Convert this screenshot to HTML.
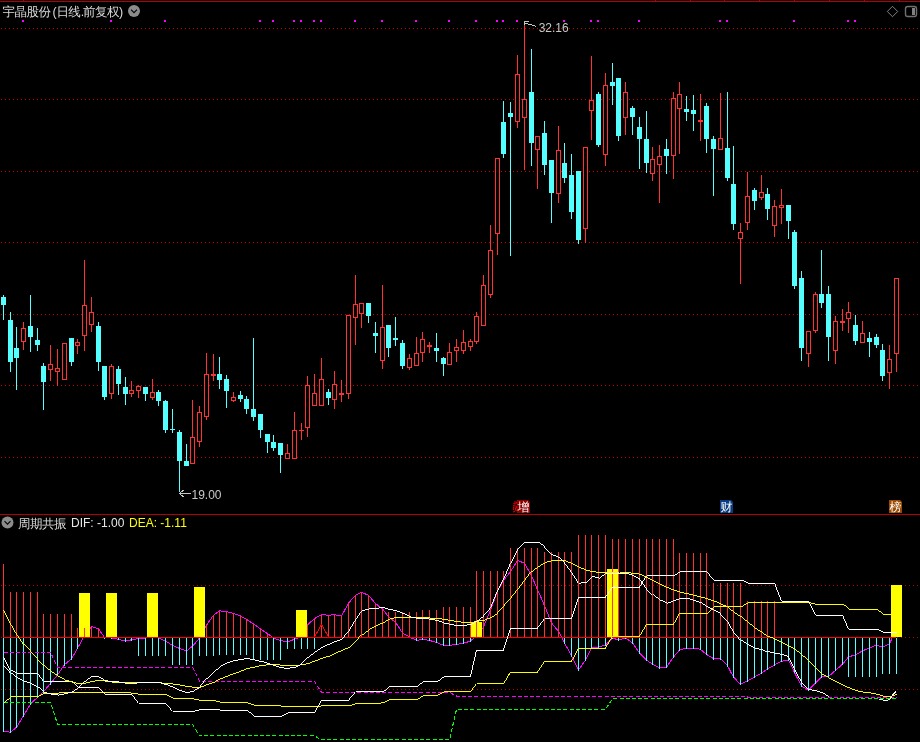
<!DOCTYPE html>
<html lang="zh"><head><meta charset="utf-8"><title>宇晶股份 日线</title>
<style>html,body{margin:0;padding:0;background:#000;}body{width:920px;height:742px;overflow:hidden;position:relative;font-family:"Liberation Sans","WenQuanYi Zen Hei","Noto Sans CJK SC",sans-serif;}svg{position:absolute;left:0;top:0;display:block;will-change:transform}text{font-family:"Liberation Sans","WenQuanYi Zen Hei","Noto Sans CJK SC",sans-serif;font-size:12px}.cj{font-family:"Liberation Sans","WenQuanYi Zen Hei","Noto Sans CJK SC",sans-serif}</style></head><body>
<svg width="920" height="742" viewBox="0 0 920 742">
<rect width="920" height="742" fill="#000"/>
<g shape-rendering="crispEdges">
<rect x="0" y="1" width="920" height="1" fill="#b40000"/>
<path d="M23 0v1M655 0v1M690 0v1M724 0v1M759 0v1M794 0v1M829 0v1M864 0v1M899 0v1" stroke="#b40000" stroke-width="1" transform="translate(0.5,0)"/>
<line x1="1" y1="28.5" x2="920" y2="28.5" stroke="#c80000" stroke-width="1" stroke-dasharray="1 3"/>
<line x1="1" y1="99.5" x2="920" y2="99.5" stroke="#c80000" stroke-width="1" stroke-dasharray="1 3"/>
<line x1="1" y1="171.5" x2="920" y2="171.5" stroke="#c80000" stroke-width="1" stroke-dasharray="1 3"/>
<line x1="1" y1="242.5" x2="920" y2="242.5" stroke="#c80000" stroke-width="1" stroke-dasharray="1 3"/>
<line x1="1" y1="314.5" x2="920" y2="314.5" stroke="#c80000" stroke-width="1" stroke-dasharray="1 3"/>
<line x1="1" y1="385.5" x2="920" y2="385.5" stroke="#c80000" stroke-width="1" stroke-dasharray="1 3"/>
<line x1="1" y1="457.5" x2="920" y2="457.5" stroke="#c80000" stroke-width="1" stroke-dasharray="1 3"/>
<rect x="0" y="514" width="920" height="1" fill="#b40000"/>
<line x1="1" y1="585.5" x2="920" y2="585.5" stroke="#b40000" stroke-width="1" stroke-dasharray="1 3"/>
<line x1="1" y1="637.5" x2="920" y2="637.5" stroke="#b40000" stroke-width="1" stroke-dasharray="1 3"/>
<line x1="1" y1="689.5" x2="920" y2="689.5" stroke="#b40000" stroke-width="1" stroke-dasharray="1 3"/>
<rect x="22" y="20" width="2" height="2" fill="#ff00ff"/>
<rect x="110" y="20" width="2" height="2" fill="#ff00ff"/>
<rect x="164" y="20" width="2" height="2" fill="#ff00ff"/>
<rect x="259" y="20" width="2" height="2" fill="#ff00ff"/>
<rect x="272" y="20" width="2" height="2" fill="#ff00ff"/>
<rect x="293" y="20" width="2" height="2" fill="#ff00ff"/>
<rect x="300" y="20" width="2" height="2" fill="#ff00ff"/>
<rect x="313" y="20" width="2" height="2" fill="#ff00ff"/>
<rect x="320" y="20" width="2" height="2" fill="#ff00ff"/>
<rect x="354" y="20" width="2" height="2" fill="#ff00ff"/>
<rect x="381" y="20" width="2" height="2" fill="#ff00ff"/>
<rect x="415" y="20" width="2" height="2" fill="#ff00ff"/>
<rect x="448" y="20" width="2" height="2" fill="#ff00ff"/>
<rect x="475" y="20" width="2" height="2" fill="#ff00ff"/>
<rect x="496" y="20" width="2" height="2" fill="#ff00ff"/>
<rect x="502" y="20" width="2" height="2" fill="#ff00ff"/>
<rect x="516" y="20" width="2" height="2" fill="#ff00ff"/>
<rect x="563" y="20" width="2" height="2" fill="#ff00ff"/>
<rect x="590" y="20" width="2" height="2" fill="#ff00ff"/>
<rect x="597" y="20" width="2" height="2" fill="#ff00ff"/>
<rect x="638" y="20" width="2" height="2" fill="#ff00ff"/>
<rect x="719" y="20" width="2" height="2" fill="#ff00ff"/>
<rect x="726" y="20" width="2" height="2" fill="#ff00ff"/>
<rect x="793" y="20" width="2" height="2" fill="#ff00ff"/>
<rect x="847" y="20" width="2" height="2" fill="#ff00ff"/>
<rect x="854" y="20" width="2" height="2" fill="#ff00ff"/>
<rect x="3" y="295" width="1" height="25" fill="#54ffff"/>
<rect x="1" y="297" width="5" height="8" fill="#54ffff"/>
<rect x="10" y="312" width="1" height="60" fill="#54ffff"/>
<rect x="8" y="320" width="5" height="42" fill="#54ffff"/>
<rect x="16" y="327" width="1" height="63" fill="#54ffff"/>
<rect x="14" y="348" width="5" height="10" fill="#54ffff"/>
<rect x="23" y="322" width="1" height="28" fill="#ff3232"/>
<rect x="21" y="328" width="5" height="14" fill="#ff3232"/><rect x="22" y="329" width="3" height="12" fill="#000"/>
<rect x="30" y="295" width="1" height="57" fill="#54ffff"/>
<rect x="28" y="326" width="5" height="11" fill="#54ffff"/>
<rect x="37" y="328" width="1" height="23" fill="#54ffff"/>
<rect x="35" y="340" width="5" height="5" fill="#54ffff"/>
<rect x="43" y="363" width="1" height="47" fill="#54ffff"/>
<rect x="41" y="366" width="5" height="16" fill="#54ffff"/>
<rect x="50" y="345" width="1" height="36" fill="#ff3232"/>
<rect x="48" y="364" width="5" height="6" fill="#ff3232"/><rect x="49" y="365" width="3" height="4" fill="#000"/>
<rect x="57" y="349" width="1" height="37" fill="#ff3232"/>
<rect x="55" y="368" width="5" height="4" fill="#ff3232"/><rect x="56" y="369" width="3" height="2" fill="#000"/>
<rect x="64" y="343" width="1" height="37" fill="#ff3232"/>
<rect x="62" y="343" width="5" height="37" fill="#ff3232"/><rect x="63" y="344" width="3" height="35" fill="#000"/>
<rect x="71" y="338" width="1" height="28" fill="#54ffff"/>
<rect x="69" y="338" width="5" height="24" fill="#54ffff"/>
<rect x="77" y="339" width="1" height="15" fill="#ff3232"/>
<rect x="75" y="342" width="5" height="4" fill="#ff3232"/><rect x="76" y="343" width="3" height="2" fill="#000"/>
<rect x="84" y="260" width="1" height="91" fill="#ff3232"/>
<rect x="82" y="305" width="5" height="31" fill="#ff3232"/><rect x="83" y="306" width="3" height="29" fill="#000"/>
<rect x="91" y="297" width="1" height="35" fill="#ff3232"/>
<rect x="89" y="312" width="5" height="13" fill="#ff3232"/><rect x="90" y="313" width="3" height="11" fill="#000"/>
<rect x="98" y="322" width="1" height="49" fill="#54ffff"/>
<rect x="96" y="326" width="5" height="36" fill="#54ffff"/>
<rect x="104" y="366" width="1" height="34" fill="#54ffff"/>
<rect x="102" y="366" width="5" height="31" fill="#54ffff"/>
<rect x="111" y="364" width="1" height="35" fill="#ff3232"/>
<rect x="109" y="366" width="5" height="28" fill="#ff3232"/><rect x="110" y="367" width="3" height="26" fill="#000"/>
<rect x="118" y="366" width="1" height="29" fill="#54ffff"/>
<rect x="116" y="369" width="5" height="15" fill="#54ffff"/>
<rect x="125" y="377" width="1" height="28" fill="#54ffff"/>
<rect x="123" y="387" width="5" height="7" fill="#54ffff"/>
<rect x="131" y="381" width="1" height="16" fill="#ff3232"/>
<rect x="129" y="390" width="5" height="4" fill="#ff3232"/><rect x="130" y="391" width="3" height="2" fill="#000"/>
<rect x="138" y="385" width="1" height="13" fill="#ff3232"/>
<rect x="136" y="386" width="5" height="5" fill="#ff3232"/><rect x="137" y="387" width="3" height="3" fill="#000"/>
<rect x="145" y="387" width="1" height="14" fill="#54ffff"/>
<rect x="143" y="387" width="5" height="7" fill="#54ffff"/>
<rect x="152" y="379" width="1" height="21" fill="#ff3232"/>
<rect x="150" y="392" width="5" height="6" fill="#ff3232"/><rect x="151" y="393" width="3" height="4" fill="#000"/>
<rect x="158" y="390" width="1" height="16" fill="#54ffff"/>
<rect x="156" y="392" width="5" height="9" fill="#54ffff"/>
<rect x="165" y="400" width="1" height="33" fill="#54ffff"/>
<rect x="163" y="401" width="5" height="29" fill="#54ffff"/>
<rect x="172" y="409" width="1" height="24" fill="#54ffff"/>
<rect x="170" y="429" width="5" height="1" fill="#54ffff"/>
<rect x="179" y="430" width="1" height="62" fill="#54ffff"/>
<rect x="177" y="432" width="5" height="29" fill="#54ffff"/>
<rect x="186" y="444" width="1" height="22" fill="#54ffff"/>
<rect x="184" y="461" width="5" height="5" fill="#54ffff"/>
<rect x="192" y="400" width="1" height="64" fill="#ff3232"/>
<rect x="190" y="437" width="5" height="27" fill="#ff3232"/><rect x="191" y="438" width="3" height="25" fill="#000"/>
<rect x="199" y="406" width="1" height="41" fill="#ff3232"/>
<rect x="197" y="412" width="5" height="30" fill="#ff3232"/><rect x="198" y="413" width="3" height="28" fill="#000"/>
<rect x="206" y="353" width="1" height="67" fill="#ff3232"/>
<rect x="204" y="374" width="5" height="43" fill="#ff3232"/><rect x="205" y="375" width="3" height="41" fill="#000"/>
<rect x="213" y="354" width="1" height="27" fill="#ff3232"/>
<rect x="211" y="374" width="5" height="2" fill="#ff3232"/>
<rect x="219" y="357" width="1" height="32" fill="#54ffff"/>
<rect x="217" y="374" width="5" height="6" fill="#54ffff"/>
<rect x="226" y="375" width="1" height="33" fill="#54ffff"/>
<rect x="224" y="379" width="5" height="12" fill="#54ffff"/>
<rect x="233" y="392" width="1" height="10" fill="#ff3232"/>
<rect x="231" y="397" width="5" height="4" fill="#ff3232"/><rect x="232" y="398" width="3" height="2" fill="#000"/>
<rect x="240" y="391" width="1" height="11" fill="#54ffff"/>
<rect x="238" y="395" width="5" height="4" fill="#54ffff"/>
<rect x="246" y="396" width="1" height="18" fill="#54ffff"/>
<rect x="244" y="399" width="5" height="10" fill="#54ffff"/>
<rect x="253" y="338" width="1" height="83" fill="#54ffff"/>
<rect x="251" y="409" width="5" height="8" fill="#54ffff"/>
<rect x="260" y="414" width="1" height="24" fill="#54ffff"/>
<rect x="258" y="414" width="5" height="16" fill="#54ffff"/>
<rect x="267" y="434" width="1" height="19" fill="#54ffff"/>
<rect x="265" y="434" width="5" height="8" fill="#54ffff"/>
<rect x="273" y="435" width="1" height="16" fill="#54ffff"/>
<rect x="271" y="442" width="5" height="6" fill="#54ffff"/>
<rect x="280" y="443" width="1" height="30" fill="#54ffff"/>
<rect x="278" y="443" width="5" height="12" fill="#54ffff"/>
<rect x="287" y="444" width="1" height="15" fill="#ff3232"/>
<rect x="285" y="453" width="5" height="6" fill="#ff3232"/><rect x="286" y="454" width="3" height="4" fill="#000"/>
<rect x="294" y="412" width="1" height="47" fill="#ff3232"/>
<rect x="292" y="430" width="5" height="29" fill="#ff3232"/><rect x="293" y="431" width="3" height="27" fill="#000"/>
<rect x="301" y="423" width="1" height="17" fill="#ff3232"/>
<rect x="299" y="430" width="5" height="1" fill="#ff3232"/>
<rect x="307" y="376" width="1" height="61" fill="#ff3232"/>
<rect x="305" y="385" width="5" height="43" fill="#ff3232"/><rect x="306" y="386" width="3" height="41" fill="#000"/>
<rect x="314" y="374" width="1" height="32" fill="#ff3232"/>
<rect x="312" y="393" width="5" height="13" fill="#ff3232"/><rect x="313" y="394" width="3" height="11" fill="#000"/>
<rect x="321" y="358" width="1" height="48" fill="#ff3232"/>
<rect x="319" y="379" width="5" height="27" fill="#ff3232"/><rect x="320" y="380" width="3" height="25" fill="#000"/>
<rect x="328" y="389" width="1" height="16" fill="#54ffff"/>
<rect x="326" y="392" width="5" height="6" fill="#54ffff"/>
<rect x="334" y="371" width="1" height="38" fill="#ff3232"/>
<rect x="332" y="384" width="5" height="16" fill="#ff3232"/><rect x="333" y="385" width="3" height="14" fill="#000"/>
<rect x="341" y="380" width="1" height="22" fill="#ff3232"/>
<rect x="339" y="393" width="5" height="2" fill="#ff3232"/>
<rect x="348" y="315" width="1" height="84" fill="#ff3232"/>
<rect x="346" y="315" width="5" height="79" fill="#ff3232"/><rect x="347" y="316" width="3" height="77" fill="#000"/>
<rect x="355" y="275" width="1" height="70" fill="#ff3232"/>
<rect x="353" y="304" width="5" height="14" fill="#ff3232"/><rect x="354" y="305" width="3" height="12" fill="#000"/>
<rect x="361" y="303" width="1" height="25" fill="#ff3232"/>
<rect x="359" y="303" width="5" height="11" fill="#ff3232"/><rect x="360" y="304" width="3" height="9" fill="#000"/>
<rect x="368" y="303" width="1" height="20" fill="#54ffff"/>
<rect x="366" y="303" width="5" height="13" fill="#54ffff"/>
<rect x="375" y="322" width="1" height="31" fill="#54ffff"/>
<rect x="373" y="333" width="5" height="3" fill="#54ffff"/>
<rect x="382" y="285" width="1" height="84" fill="#ff3232"/>
<rect x="380" y="327" width="5" height="34" fill="#ff3232"/><rect x="381" y="328" width="3" height="32" fill="#000"/>
<rect x="388" y="325" width="1" height="32" fill="#54ffff"/>
<rect x="386" y="325" width="5" height="23" fill="#54ffff"/>
<rect x="395" y="317" width="1" height="29" fill="#54ffff"/>
<rect x="393" y="338" width="5" height="2" fill="#54ffff"/>
<rect x="402" y="340" width="1" height="29" fill="#54ffff"/>
<rect x="400" y="343" width="5" height="23" fill="#54ffff"/>
<rect x="409" y="354" width="1" height="16" fill="#ff3232"/>
<rect x="407" y="358" width="5" height="10" fill="#ff3232"/><rect x="408" y="359" width="3" height="8" fill="#000"/>
<rect x="416" y="337" width="1" height="29" fill="#ff3232"/>
<rect x="414" y="353" width="5" height="13" fill="#ff3232"/><rect x="415" y="354" width="3" height="11" fill="#000"/>
<rect x="422" y="332" width="1" height="30" fill="#ff3232"/>
<rect x="420" y="339" width="5" height="14" fill="#ff3232"/><rect x="421" y="340" width="3" height="12" fill="#000"/>
<rect x="429" y="342" width="1" height="11" fill="#ff3232"/>
<rect x="427" y="345" width="5" height="2" fill="#ff3232"/>
<rect x="436" y="333" width="1" height="29" fill="#54ffff"/>
<rect x="434" y="348" width="5" height="3" fill="#54ffff"/>
<rect x="443" y="357" width="1" height="19" fill="#54ffff"/>
<rect x="441" y="358" width="5" height="6" fill="#54ffff"/>
<rect x="449" y="343" width="1" height="22" fill="#ff3232"/>
<rect x="447" y="352" width="5" height="13" fill="#ff3232"/><rect x="448" y="353" width="3" height="11" fill="#000"/>
<rect x="456" y="339" width="1" height="23" fill="#ff3232"/>
<rect x="454" y="347" width="5" height="4" fill="#ff3232"/><rect x="455" y="348" width="3" height="2" fill="#000"/>
<rect x="463" y="330" width="1" height="24" fill="#ff3232"/>
<rect x="461" y="342" width="5" height="9" fill="#ff3232"/><rect x="462" y="343" width="3" height="7" fill="#000"/>
<rect x="470" y="339" width="1" height="12" fill="#ff3232"/>
<rect x="468" y="341" width="5" height="6" fill="#ff3232"/><rect x="469" y="342" width="3" height="4" fill="#000"/>
<rect x="476" y="312" width="1" height="32" fill="#ff3232"/>
<rect x="474" y="316" width="5" height="26" fill="#ff3232"/><rect x="475" y="317" width="3" height="24" fill="#000"/>
<rect x="483" y="275" width="1" height="51" fill="#ff3232"/>
<rect x="481" y="285" width="5" height="41" fill="#ff3232"/><rect x="482" y="286" width="3" height="39" fill="#000"/>
<rect x="490" y="225" width="1" height="73" fill="#ff3232"/>
<rect x="488" y="250" width="5" height="45" fill="#ff3232"/><rect x="489" y="251" width="3" height="43" fill="#000"/>
<rect x="497" y="158" width="1" height="97" fill="#ff3232"/>
<rect x="495" y="158" width="5" height="76" fill="#ff3232"/><rect x="496" y="159" width="3" height="74" fill="#000"/>
<rect x="503" y="101" width="1" height="57" fill="#54ffff"/>
<rect x="501" y="122" width="5" height="32" fill="#54ffff"/>
<rect x="510" y="102" width="1" height="154" fill="#54ffff"/>
<rect x="508" y="113" width="5" height="4" fill="#54ffff"/>
<rect x="517" y="55" width="1" height="73" fill="#ff3232"/>
<rect x="515" y="74" width="5" height="48" fill="#ff3232"/><rect x="516" y="75" width="3" height="46" fill="#000"/>
<rect x="524" y="24" width="1" height="146" fill="#ff3232"/>
<rect x="522" y="99" width="5" height="19" fill="#ff3232"/><rect x="523" y="100" width="3" height="17" fill="#000"/>
<rect x="531" y="49" width="1" height="117" fill="#54ffff"/>
<rect x="529" y="92" width="5" height="51" fill="#54ffff"/>
<rect x="537" y="136" width="1" height="53" fill="#ff3232"/>
<rect x="535" y="136" width="5" height="14" fill="#ff3232"/><rect x="536" y="137" width="3" height="12" fill="#000"/>
<rect x="544" y="121" width="1" height="54" fill="#54ffff"/>
<rect x="542" y="133" width="5" height="32" fill="#54ffff"/>
<rect x="551" y="160" width="1" height="63" fill="#54ffff"/>
<rect x="549" y="160" width="5" height="33" fill="#54ffff"/>
<rect x="558" y="126" width="1" height="77" fill="#ff3232"/>
<rect x="556" y="150" width="5" height="44" fill="#ff3232"/><rect x="557" y="151" width="3" height="42" fill="#000"/>
<rect x="564" y="143" width="1" height="40" fill="#54ffff"/>
<rect x="562" y="163" width="5" height="15" fill="#54ffff"/>
<rect x="571" y="154" width="1" height="65" fill="#54ffff"/>
<rect x="569" y="175" width="5" height="37" fill="#54ffff"/>
<rect x="578" y="171" width="1" height="73" fill="#54ffff"/>
<rect x="576" y="171" width="5" height="69" fill="#54ffff"/>
<rect x="585" y="147" width="1" height="96" fill="#ff3232"/>
<rect x="583" y="147" width="5" height="82" fill="#ff3232"/><rect x="584" y="148" width="3" height="80" fill="#000"/>
<rect x="591" y="56" width="1" height="84" fill="#ff3232"/>
<rect x="589" y="100" width="5" height="11" fill="#ff3232"/><rect x="590" y="101" width="3" height="9" fill="#000"/>
<rect x="598" y="92" width="1" height="55" fill="#54ffff"/>
<rect x="596" y="94" width="5" height="51" fill="#54ffff"/>
<rect x="605" y="73" width="1" height="93" fill="#ff3232"/>
<rect x="603" y="85" width="5" height="70" fill="#ff3232"/><rect x="604" y="86" width="3" height="68" fill="#000"/>
<rect x="612" y="63" width="1" height="42" fill="#54ffff"/>
<rect x="610" y="82" width="5" height="4" fill="#54ffff"/>
<rect x="618" y="78" width="1" height="63" fill="#54ffff"/>
<rect x="616" y="78" width="5" height="58" fill="#54ffff"/>
<rect x="625" y="82" width="1" height="53" fill="#ff3232"/>
<rect x="623" y="92" width="5" height="26" fill="#ff3232"/><rect x="624" y="93" width="3" height="24" fill="#000"/>
<rect x="632" y="106" width="1" height="29" fill="#54ffff"/>
<rect x="630" y="108" width="5" height="9" fill="#54ffff"/>
<rect x="639" y="117" width="1" height="52" fill="#54ffff"/>
<rect x="637" y="127" width="5" height="12" fill="#54ffff"/>
<rect x="646" y="111" width="1" height="62" fill="#54ffff"/>
<rect x="644" y="139" width="5" height="24" fill="#54ffff"/>
<rect x="652" y="147" width="1" height="34" fill="#ff3232"/>
<rect x="650" y="159" width="5" height="15" fill="#ff3232"/><rect x="651" y="160" width="3" height="13" fill="#000"/>
<rect x="659" y="145" width="1" height="58" fill="#ff3232"/>
<rect x="657" y="156" width="5" height="9" fill="#ff3232"/><rect x="658" y="157" width="3" height="7" fill="#000"/>
<rect x="666" y="139" width="1" height="35" fill="#54ffff"/>
<rect x="664" y="149" width="5" height="7" fill="#54ffff"/>
<rect x="673" y="92" width="1" height="87" fill="#ff3232"/>
<rect x="671" y="98" width="5" height="58" fill="#ff3232"/><rect x="672" y="99" width="3" height="56" fill="#000"/>
<rect x="679" y="82" width="1" height="72" fill="#ff3232"/>
<rect x="677" y="94" width="5" height="15" fill="#ff3232"/><rect x="678" y="95" width="3" height="13" fill="#000"/>
<rect x="686" y="96" width="1" height="25" fill="#54ffff"/>
<rect x="684" y="109" width="5" height="3" fill="#54ffff"/>
<rect x="693" y="95" width="1" height="36" fill="#54ffff"/>
<rect x="691" y="110" width="5" height="4" fill="#54ffff"/>
<rect x="700" y="94" width="1" height="47" fill="#ff3232"/>
<rect x="698" y="120" width="5" height="2" fill="#ff3232"/>
<rect x="706" y="103" width="1" height="50" fill="#54ffff"/>
<rect x="704" y="106" width="5" height="33" fill="#54ffff"/>
<rect x="713" y="136" width="1" height="60" fill="#54ffff"/>
<rect x="711" y="139" width="5" height="10" fill="#54ffff"/>
<rect x="720" y="93" width="1" height="57" fill="#ff3232"/>
<rect x="718" y="138" width="5" height="12" fill="#ff3232"/><rect x="719" y="139" width="3" height="10" fill="#000"/>
<rect x="727" y="92" width="1" height="89" fill="#54ffff"/>
<rect x="725" y="148" width="5" height="30" fill="#54ffff"/>
<rect x="733" y="146" width="1" height="84" fill="#54ffff"/>
<rect x="731" y="184" width="5" height="40" fill="#54ffff"/>
<rect x="740" y="223" width="1" height="61" fill="#ff3232"/>
<rect x="738" y="232" width="5" height="7" fill="#ff3232"/><rect x="739" y="233" width="3" height="5" fill="#000"/>
<rect x="747" y="172" width="1" height="58" fill="#ff3232"/>
<rect x="745" y="196" width="5" height="27" fill="#ff3232"/><rect x="746" y="197" width="3" height="25" fill="#000"/>
<rect x="754" y="188" width="1" height="22" fill="#54ffff"/>
<rect x="752" y="190" width="5" height="11" fill="#54ffff"/>
<rect x="761" y="175" width="1" height="25" fill="#ff3232"/>
<rect x="759" y="192" width="5" height="6" fill="#ff3232"/><rect x="760" y="193" width="3" height="4" fill="#000"/>
<rect x="767" y="188" width="1" height="32" fill="#54ffff"/>
<rect x="765" y="194" width="5" height="15" fill="#54ffff"/>
<rect x="774" y="200" width="1" height="37" fill="#ff3232"/>
<rect x="772" y="206" width="5" height="20" fill="#ff3232"/><rect x="773" y="207" width="3" height="18" fill="#000"/>
<rect x="781" y="189" width="1" height="35" fill="#ff3232"/>
<rect x="779" y="205" width="5" height="3" fill="#ff3232"/><rect x="780" y="206" width="3" height="1" fill="#000"/>
<rect x="788" y="205" width="1" height="34" fill="#54ffff"/>
<rect x="786" y="205" width="5" height="16" fill="#54ffff"/>
<rect x="794" y="230" width="1" height="59" fill="#54ffff"/>
<rect x="792" y="232" width="5" height="54" fill="#54ffff"/>
<rect x="801" y="271" width="1" height="90" fill="#54ffff"/>
<rect x="799" y="278" width="5" height="70" fill="#54ffff"/>
<rect x="808" y="331" width="1" height="36" fill="#ff3232"/>
<rect x="806" y="331" width="5" height="23" fill="#ff3232"/><rect x="807" y="332" width="3" height="21" fill="#000"/>
<rect x="815" y="292" width="1" height="41" fill="#ff3232"/>
<rect x="813" y="294" width="5" height="37" fill="#ff3232"/><rect x="814" y="295" width="3" height="35" fill="#000"/>
<rect x="821" y="250" width="1" height="58" fill="#54ffff"/>
<rect x="819" y="294" width="5" height="9" fill="#54ffff"/>
<rect x="828" y="286" width="1" height="75" fill="#54ffff"/>
<rect x="826" y="294" width="5" height="43" fill="#54ffff"/>
<rect x="835" y="316" width="1" height="48" fill="#ff3232"/>
<rect x="833" y="321" width="5" height="30" fill="#ff3232"/><rect x="834" y="322" width="3" height="28" fill="#000"/>
<rect x="842" y="309" width="1" height="22" fill="#ff3232"/>
<rect x="840" y="321" width="5" height="2" fill="#ff3232"/>
<rect x="848" y="302" width="1" height="31" fill="#ff3232"/>
<rect x="846" y="312" width="5" height="7" fill="#ff3232"/><rect x="847" y="313" width="3" height="5" fill="#000"/>
<rect x="855" y="315" width="1" height="30" fill="#54ffff"/>
<rect x="853" y="325" width="5" height="16" fill="#54ffff"/>
<rect x="862" y="321" width="1" height="22" fill="#ff3232"/>
<rect x="860" y="333" width="5" height="10" fill="#ff3232"/><rect x="861" y="334" width="3" height="8" fill="#000"/>
<rect x="869" y="332" width="1" height="25" fill="#54ffff"/>
<rect x="867" y="338" width="5" height="4" fill="#54ffff"/>
<rect x="876" y="334" width="1" height="14" fill="#54ffff"/>
<rect x="874" y="337" width="5" height="8" fill="#54ffff"/>
<rect x="882" y="344" width="1" height="37" fill="#54ffff"/>
<rect x="880" y="350" width="5" height="26" fill="#54ffff"/>
<rect x="889" y="345" width="1" height="44" fill="#ff3232"/>
<rect x="887" y="359" width="5" height="14" fill="#ff3232"/><rect x="888" y="360" width="3" height="12" fill="#000"/>
<rect x="896" y="278" width="1" height="94" fill="#ff3232"/>
<rect x="894" y="278" width="5" height="76" fill="#ff3232"/><rect x="895" y="279" width="3" height="74" fill="#000"/>
</g>
<g shape-rendering="crispEdges" fill="none">
<polyline points="3.5,731.2 10.5,732.3 16.5,727.3 23.5,715.7 30.5,703.9 37.5,697.4 43.5,691.7 50.5,683.6 57.5,675.0 64.5,664.6 71.5,658.9 77.5,648.3 84.5,635.4 91.5,626.6 98.5,628.7 104.5,637.5 111.5,638.0 118.5,639.3 125.5,641.1 131.5,639.8 138.5,638.5 145.5,638.0 152.5,637.4 158.5,637.8 165.5,641.1 172.5,645.3 179.5,648.4 186.5,651.0 192.5,646.3 199.5,638.0 206.5,625.1 213.5,615.2 219.5,610.8 226.5,611.6 233.5,613.4 240.5,616.0 246.5,619.4 253.5,623.8 260.5,629.0 267.5,633.6 273.5,638.0 280.5,640.6 287.5,641.9 294.5,639.3 301.5,636.7 307.5,624.8 314.5,618.6 321.5,614.7 328.5,615.2 334.5,614.7 341.5,616.0 348.5,603.1 355.5,595.3 361.5,592.2 368.5,595.3 375.5,603.6 382.5,608.9 388.5,616.9 395.5,622.1 402.5,633.0 409.5,637.0 416.5,640.4 422.5,639.3 429.5,640.4 436.5,642.5 443.5,645.3 449.5,645.3 456.5,644.4 463.5,643.3 470.5,641.0 476.5,635.7 483.5,627.1 490.5,610.0 497.5,591.0 503.5,580.4 510.5,571.8 517.5,560.4 524.5,563.2 531.5,575.8 537.5,589.6 544.5,605.6 551.5,622.9 558.5,631.4 564.5,642.9 571.5,655.7 578.5,670.0 585.5,660.0 591.5,647.7 598.5,647.1 605.5,645.0 612.5,638.0 618.5,640.0 625.5,638.0 632.5,642.9 639.5,652.9 646.5,660.0 652.5,664.3 659.5,667.7 666.5,667.1 673.5,657.1 679.5,650.0 686.5,648.0 693.5,648.0 700.5,649.4 706.5,654.3 713.5,658.6 720.5,658.6 727.5,665.7 733.5,677.1 740.5,684.3 747.5,680.6 754.5,677.1 761.5,672.9 767.5,669.1 774.5,665.0 781.5,661.3 788.5,660.2 794.5,672.4 801.5,686.3 808.5,690.0 815.5,683.0 821.5,677.0 828.5,676.5 835.5,670.4 842.5,664.2 848.5,656.9 855.5,654.8 862.5,650.9 869.5,647.9 876.5,645.0 882.5,647.1 889.5,643.9 896.5,628.0" stroke="#ff00ff" stroke-width="1" />
<rect x="79" y="593" width="11" height="44" fill="#ffff00"/>
<rect x="106" y="593" width="11" height="44" fill="#ffff00"/>
<rect x="147" y="593" width="11" height="44" fill="#ffff00"/>
<rect x="194" y="587" width="11" height="50" fill="#ffff00"/>
<rect x="296" y="610" width="11" height="27" fill="#ffff00"/>
<rect x="471" y="622" width="11" height="15" fill="#ffff00"/>
<rect x="607" y="569" width="11" height="68" fill="#ffff00"/>
<rect x="891" y="585" width="11" height="52" fill="#ffff00"/>
<rect x="3" y="564" width="1" height="73" fill="#ff3232"/>
<rect x="3" y="638" width="1" height="94" fill="#54ffff"/>
<rect x="10" y="592" width="1" height="45" fill="#ff3232"/>
<rect x="10" y="638" width="1" height="95" fill="#54ffff"/>
<rect x="16" y="592" width="1" height="45" fill="#ff3232"/>
<rect x="16" y="638" width="1" height="90" fill="#54ffff"/>
<rect x="23" y="592" width="1" height="45" fill="#ff3232"/>
<rect x="23" y="638" width="1" height="79" fill="#54ffff"/>
<rect x="30" y="592" width="1" height="45" fill="#ff3232"/>
<rect x="30" y="638" width="1" height="67" fill="#54ffff"/>
<rect x="37" y="592" width="1" height="45" fill="#ff3232"/>
<rect x="37" y="638" width="1" height="60" fill="#54ffff"/>
<rect x="43" y="614" width="1" height="23" fill="#ff3232"/>
<rect x="43" y="638" width="1" height="55" fill="#54ffff"/>
<rect x="50" y="614" width="1" height="23" fill="#ff3232"/>
<rect x="50" y="638" width="1" height="47" fill="#54ffff"/>
<rect x="57" y="614" width="1" height="23" fill="#ff3232"/>
<rect x="57" y="638" width="1" height="38" fill="#54ffff"/>
<rect x="64" y="614" width="1" height="23" fill="#ff3232"/>
<rect x="64" y="638" width="1" height="28" fill="#54ffff"/>
<rect x="71" y="614" width="1" height="23" fill="#ff3232"/>
<rect x="71" y="638" width="1" height="22" fill="#54ffff"/>
<rect x="77" y="628" width="1" height="9" fill="#ff3232"/>
<rect x="77" y="638" width="1" height="11" fill="#54ffff"/>
<rect x="84" y="628" width="1" height="9" fill="#ff3232"/>
<rect x="84" y="635" width="1" height="2" fill="#ff3232"/>
<rect x="91" y="628" width="1" height="9" fill="#ff3232"/>
<rect x="91" y="627" width="1" height="10" fill="#ff3232"/>
<rect x="98" y="628" width="1" height="9" fill="#ff3232"/>
<rect x="98" y="629" width="1" height="8" fill="#ff3232"/>
<rect x="104" y="638" width="1" height="1" fill="#54ffff"/>
<rect x="111" y="638" width="1" height="1" fill="#54ffff"/>
<rect x="118" y="638" width="1" height="2" fill="#54ffff"/>
<rect x="125" y="638" width="1" height="4" fill="#54ffff"/>
<rect x="131" y="638" width="1" height="3" fill="#54ffff"/>
<rect x="138" y="638" width="1" height="18" fill="#54ffff"/>
<rect x="138" y="638" width="1" height="1" fill="#54ffff"/>
<rect x="145" y="638" width="1" height="18" fill="#54ffff"/>
<rect x="145" y="638" width="1" height="1" fill="#54ffff"/>
<rect x="152" y="638" width="1" height="18" fill="#54ffff"/>
<rect x="158" y="638" width="1" height="18" fill="#54ffff"/>
<rect x="158" y="638" width="1" height="1" fill="#54ffff"/>
<rect x="165" y="638" width="1" height="18" fill="#54ffff"/>
<rect x="165" y="638" width="1" height="4" fill="#54ffff"/>
<rect x="172" y="638" width="1" height="27" fill="#54ffff"/>
<rect x="172" y="638" width="1" height="8" fill="#54ffff"/>
<rect x="179" y="638" width="1" height="27" fill="#54ffff"/>
<rect x="179" y="638" width="1" height="11" fill="#54ffff"/>
<rect x="186" y="638" width="1" height="27" fill="#54ffff"/>
<rect x="186" y="638" width="1" height="14" fill="#54ffff"/>
<rect x="192" y="638" width="1" height="27" fill="#54ffff"/>
<rect x="192" y="638" width="1" height="9" fill="#54ffff"/>
<rect x="199" y="638" width="1" height="18" fill="#54ffff"/>
<rect x="199" y="638" width="1" height="1" fill="#54ffff"/>
<rect x="206" y="638" width="1" height="18" fill="#54ffff"/>
<rect x="206" y="625" width="1" height="12" fill="#ff3232"/>
<rect x="213" y="638" width="1" height="18" fill="#54ffff"/>
<rect x="213" y="615" width="1" height="22" fill="#ff3232"/>
<rect x="219" y="638" width="1" height="17" fill="#54ffff"/>
<rect x="219" y="611" width="1" height="26" fill="#ff3232"/>
<rect x="226" y="638" width="1" height="17" fill="#54ffff"/>
<rect x="226" y="612" width="1" height="25" fill="#ff3232"/>
<rect x="233" y="638" width="1" height="17" fill="#54ffff"/>
<rect x="233" y="613" width="1" height="24" fill="#ff3232"/>
<rect x="240" y="638" width="1" height="17" fill="#54ffff"/>
<rect x="240" y="616" width="1" height="21" fill="#ff3232"/>
<rect x="246" y="638" width="1" height="17" fill="#54ffff"/>
<rect x="246" y="619" width="1" height="18" fill="#ff3232"/>
<rect x="253" y="638" width="1" height="22" fill="#54ffff"/>
<rect x="253" y="624" width="1" height="13" fill="#ff3232"/>
<rect x="260" y="638" width="1" height="22" fill="#54ffff"/>
<rect x="260" y="629" width="1" height="8" fill="#ff3232"/>
<rect x="267" y="638" width="1" height="22" fill="#54ffff"/>
<rect x="267" y="634" width="1" height="3" fill="#ff3232"/>
<rect x="273" y="638" width="1" height="22" fill="#54ffff"/>
<rect x="273" y="638" width="1" height="1" fill="#54ffff"/>
<rect x="280" y="638" width="1" height="22" fill="#54ffff"/>
<rect x="280" y="638" width="1" height="4" fill="#54ffff"/>
<rect x="287" y="638" width="1" height="11" fill="#54ffff"/>
<rect x="287" y="638" width="1" height="5" fill="#54ffff"/>
<rect x="294" y="638" width="1" height="11" fill="#54ffff"/>
<rect x="294" y="638" width="1" height="2" fill="#54ffff"/>
<rect x="301" y="638" width="1" height="11" fill="#54ffff"/>
<rect x="307" y="638" width="1" height="11" fill="#54ffff"/>
<rect x="307" y="625" width="1" height="12" fill="#ff3232"/>
<rect x="314" y="638" width="1" height="11" fill="#54ffff"/>
<rect x="314" y="619" width="1" height="18" fill="#ff3232"/>
<rect x="321" y="615" width="1" height="22" fill="#ff3232"/>
<rect x="328" y="615" width="1" height="22" fill="#ff3232"/>
<rect x="334" y="615" width="1" height="22" fill="#ff3232"/>
<rect x="341" y="616" width="1" height="21" fill="#ff3232"/>
<rect x="348" y="603" width="1" height="34" fill="#ff3232"/>
<rect x="355" y="595" width="1" height="42" fill="#ff3232"/>
<rect x="361" y="592" width="1" height="45" fill="#ff3232"/>
<rect x="368" y="595" width="1" height="42" fill="#ff3232"/>
<rect x="375" y="604" width="1" height="33" fill="#ff3232"/>
<rect x="382" y="609" width="1" height="28" fill="#ff3232"/>
<rect x="388" y="612" width="1" height="25" fill="#ff3232"/>
<rect x="388" y="617" width="1" height="20" fill="#ff3232"/>
<rect x="395" y="612" width="1" height="25" fill="#ff3232"/>
<rect x="395" y="622" width="1" height="15" fill="#ff3232"/>
<rect x="402" y="612" width="1" height="25" fill="#ff3232"/>
<rect x="402" y="633" width="1" height="4" fill="#ff3232"/>
<rect x="409" y="612" width="1" height="25" fill="#ff3232"/>
<rect x="416" y="612" width="1" height="25" fill="#ff3232"/>
<rect x="416" y="638" width="1" height="3" fill="#54ffff"/>
<rect x="422" y="610" width="1" height="27" fill="#ff3232"/>
<rect x="422" y="638" width="1" height="2" fill="#54ffff"/>
<rect x="429" y="610" width="1" height="27" fill="#ff3232"/>
<rect x="429" y="638" width="1" height="3" fill="#54ffff"/>
<rect x="436" y="610" width="1" height="27" fill="#ff3232"/>
<rect x="436" y="638" width="1" height="5" fill="#54ffff"/>
<rect x="443" y="607" width="1" height="30" fill="#ff3232"/>
<rect x="443" y="638" width="1" height="8" fill="#54ffff"/>
<rect x="449" y="607" width="1" height="30" fill="#ff3232"/>
<rect x="449" y="638" width="1" height="8" fill="#54ffff"/>
<rect x="456" y="607" width="1" height="30" fill="#ff3232"/>
<rect x="456" y="638" width="1" height="7" fill="#54ffff"/>
<rect x="463" y="607" width="1" height="30" fill="#ff3232"/>
<rect x="463" y="638" width="1" height="6" fill="#54ffff"/>
<rect x="470" y="607" width="1" height="30" fill="#ff3232"/>
<rect x="470" y="638" width="1" height="4" fill="#54ffff"/>
<rect x="476" y="571" width="1" height="66" fill="#ff3232"/>
<rect x="476" y="636" width="1" height="1" fill="#ff3232"/>
<rect x="483" y="571" width="1" height="66" fill="#ff3232"/>
<rect x="483" y="627" width="1" height="10" fill="#ff3232"/>
<rect x="490" y="571" width="1" height="66" fill="#ff3232"/>
<rect x="490" y="610" width="1" height="27" fill="#ff3232"/>
<rect x="497" y="571" width="1" height="66" fill="#ff3232"/>
<rect x="497" y="591" width="1" height="46" fill="#ff3232"/>
<rect x="503" y="571" width="1" height="66" fill="#ff3232"/>
<rect x="503" y="580" width="1" height="57" fill="#ff3232"/>
<rect x="510" y="548" width="1" height="89" fill="#ff3232"/>
<rect x="510" y="572" width="1" height="65" fill="#ff3232"/>
<rect x="517" y="548" width="1" height="89" fill="#ff3232"/>
<rect x="517" y="560" width="1" height="77" fill="#ff3232"/>
<rect x="524" y="548" width="1" height="89" fill="#ff3232"/>
<rect x="524" y="563" width="1" height="74" fill="#ff3232"/>
<rect x="531" y="548" width="1" height="89" fill="#ff3232"/>
<rect x="531" y="576" width="1" height="61" fill="#ff3232"/>
<rect x="537" y="548" width="1" height="89" fill="#ff3232"/>
<rect x="537" y="590" width="1" height="47" fill="#ff3232"/>
<rect x="544" y="552" width="1" height="85" fill="#ff3232"/>
<rect x="544" y="606" width="1" height="31" fill="#ff3232"/>
<rect x="551" y="552" width="1" height="85" fill="#ff3232"/>
<rect x="551" y="623" width="1" height="14" fill="#ff3232"/>
<rect x="558" y="552" width="1" height="85" fill="#ff3232"/>
<rect x="558" y="631" width="1" height="6" fill="#ff3232"/>
<rect x="564" y="552" width="1" height="85" fill="#ff3232"/>
<rect x="564" y="638" width="1" height="6" fill="#54ffff"/>
<rect x="571" y="552" width="1" height="85" fill="#ff3232"/>
<rect x="571" y="638" width="1" height="19" fill="#54ffff"/>
<rect x="578" y="535" width="1" height="102" fill="#ff3232"/>
<rect x="578" y="638" width="1" height="33" fill="#54ffff"/>
<rect x="585" y="535" width="1" height="102" fill="#ff3232"/>
<rect x="585" y="638" width="1" height="23" fill="#54ffff"/>
<rect x="591" y="535" width="1" height="102" fill="#ff3232"/>
<rect x="591" y="638" width="1" height="11" fill="#54ffff"/>
<rect x="598" y="535" width="1" height="102" fill="#ff3232"/>
<rect x="598" y="638" width="1" height="10" fill="#54ffff"/>
<rect x="605" y="535" width="1" height="102" fill="#ff3232"/>
<rect x="605" y="638" width="1" height="8" fill="#54ffff"/>
<rect x="612" y="539" width="1" height="98" fill="#ff3232"/>
<rect x="612" y="638" width="1" height="1" fill="#54ffff"/>
<rect x="618" y="539" width="1" height="98" fill="#ff3232"/>
<rect x="618" y="638" width="1" height="3" fill="#54ffff"/>
<rect x="625" y="539" width="1" height="98" fill="#ff3232"/>
<rect x="625" y="638" width="1" height="1" fill="#54ffff"/>
<rect x="632" y="539" width="1" height="98" fill="#ff3232"/>
<rect x="632" y="638" width="1" height="6" fill="#54ffff"/>
<rect x="639" y="539" width="1" height="98" fill="#ff3232"/>
<rect x="639" y="638" width="1" height="16" fill="#54ffff"/>
<rect x="646" y="539" width="1" height="98" fill="#ff3232"/>
<rect x="646" y="638" width="1" height="23" fill="#54ffff"/>
<rect x="652" y="539" width="1" height="98" fill="#ff3232"/>
<rect x="652" y="638" width="1" height="27" fill="#54ffff"/>
<rect x="659" y="539" width="1" height="98" fill="#ff3232"/>
<rect x="659" y="638" width="1" height="31" fill="#54ffff"/>
<rect x="666" y="539" width="1" height="98" fill="#ff3232"/>
<rect x="666" y="638" width="1" height="30" fill="#54ffff"/>
<rect x="673" y="539" width="1" height="98" fill="#ff3232"/>
<rect x="673" y="638" width="1" height="20" fill="#54ffff"/>
<rect x="679" y="553" width="1" height="84" fill="#ff3232"/>
<rect x="679" y="638" width="1" height="13" fill="#54ffff"/>
<rect x="686" y="553" width="1" height="84" fill="#ff3232"/>
<rect x="686" y="638" width="1" height="11" fill="#54ffff"/>
<rect x="693" y="553" width="1" height="84" fill="#ff3232"/>
<rect x="693" y="638" width="1" height="11" fill="#54ffff"/>
<rect x="700" y="553" width="1" height="84" fill="#ff3232"/>
<rect x="700" y="638" width="1" height="12" fill="#54ffff"/>
<rect x="706" y="553" width="1" height="84" fill="#ff3232"/>
<rect x="706" y="638" width="1" height="17" fill="#54ffff"/>
<rect x="713" y="583" width="1" height="54" fill="#ff3232"/>
<rect x="713" y="638" width="1" height="22" fill="#54ffff"/>
<rect x="720" y="583" width="1" height="54" fill="#ff3232"/>
<rect x="720" y="638" width="1" height="22" fill="#54ffff"/>
<rect x="727" y="583" width="1" height="54" fill="#ff3232"/>
<rect x="727" y="638" width="1" height="29" fill="#54ffff"/>
<rect x="733" y="583" width="1" height="54" fill="#ff3232"/>
<rect x="733" y="638" width="1" height="40" fill="#54ffff"/>
<rect x="740" y="583" width="1" height="54" fill="#ff3232"/>
<rect x="740" y="638" width="1" height="47" fill="#54ffff"/>
<rect x="747" y="601" width="1" height="36" fill="#ff3232"/>
<rect x="747" y="638" width="1" height="44" fill="#54ffff"/>
<rect x="754" y="601" width="1" height="36" fill="#ff3232"/>
<rect x="754" y="638" width="1" height="40" fill="#54ffff"/>
<rect x="761" y="601" width="1" height="36" fill="#ff3232"/>
<rect x="761" y="638" width="1" height="36" fill="#54ffff"/>
<rect x="767" y="601" width="1" height="36" fill="#ff3232"/>
<rect x="767" y="638" width="1" height="32" fill="#54ffff"/>
<rect x="774" y="601" width="1" height="36" fill="#ff3232"/>
<rect x="774" y="638" width="1" height="28" fill="#54ffff"/>
<rect x="781" y="638" width="1" height="24" fill="#54ffff"/>
<rect x="788" y="638" width="1" height="23" fill="#54ffff"/>
<rect x="794" y="638" width="1" height="35" fill="#54ffff"/>
<rect x="801" y="638" width="1" height="49" fill="#54ffff"/>
<rect x="808" y="638" width="1" height="53" fill="#54ffff"/>
<rect x="815" y="638" width="1" height="46" fill="#54ffff"/>
<rect x="821" y="638" width="1" height="40" fill="#54ffff"/>
<rect x="828" y="638" width="1" height="39" fill="#54ffff"/>
<rect x="835" y="638" width="1" height="33" fill="#54ffff"/>
<rect x="842" y="638" width="1" height="27" fill="#54ffff"/>
<rect x="848" y="638" width="1" height="39" fill="#54ffff"/>
<rect x="848" y="638" width="1" height="20" fill="#54ffff"/>
<rect x="855" y="638" width="1" height="39" fill="#54ffff"/>
<rect x="855" y="638" width="1" height="18" fill="#54ffff"/>
<rect x="862" y="638" width="1" height="39" fill="#54ffff"/>
<rect x="862" y="638" width="1" height="14" fill="#54ffff"/>
<rect x="869" y="638" width="1" height="39" fill="#54ffff"/>
<rect x="869" y="638" width="1" height="11" fill="#54ffff"/>
<rect x="876" y="638" width="1" height="39" fill="#54ffff"/>
<rect x="876" y="638" width="1" height="8" fill="#54ffff"/>
<rect x="882" y="638" width="1" height="36" fill="#54ffff"/>
<rect x="882" y="638" width="1" height="10" fill="#54ffff"/>
<rect x="889" y="638" width="1" height="36" fill="#54ffff"/>
<rect x="889" y="638" width="1" height="7" fill="#54ffff"/>
<rect x="896" y="638" width="1" height="36" fill="#54ffff"/>
<polyline points="314.5,637 321.5,624.6 328.5,637" stroke="#ff0000"/>
<rect x="3" y="637" width="893" height="1" fill="#ff0000"/>
<polyline points="3.5,702.5 50.5,702.5 57.5,724.1 192.5,724.1 199.5,735.9 314.5,735.9 321.5,739.8 449.5,739.8 456.5,709.4 605.5,709.4 612.5,698.6 896.5,698.6" stroke="#00ff00" stroke-dasharray="4 2.2"/>
<polyline points="3.5,652.3 50.5,652.3 57.5,667.3 192.5,667.3 199.5,681.3 314.5,681.3 321.5,692.4 449.5,692.4 456.5,696 740.5,696 747.5,697 896.5,697" stroke="#ff00ff" stroke-dasharray="4 2.2"/>
<polyline points="3.5,702.5 10.5,696.5 16.5,696.5 23.5,696.5 30.5,696.5 37.5,696.5 43.5,693.0 50.5,693.0 57.5,693.0 64.5,692.4 71.5,692.4 77.5,692.4 84.5,692.4 91.5,692.4 98.5,692.4 104.5,692.4 111.5,692.4 118.5,692.4 125.5,692.4 131.5,693.2 138.5,694.2 145.5,694.6 152.5,694.6 158.5,694.6 165.5,694.6 172.5,698.1 179.5,698.1 186.5,698.1 192.5,698.9 199.5,700.2 206.5,700.2 213.5,700.7 219.5,702.2 226.5,702.2 233.5,702.2 240.5,702.2 246.5,702.8 253.5,705.3 260.5,705.3 267.5,705.3 273.5,705.3 280.5,706.1 287.5,706.6 294.5,706.6 301.5,706.6 307.5,706.6 314.5,706.6 321.5,705.9 328.5,705.9 334.5,705.9 341.5,705.9 348.5,705.9 355.5,703.3 361.5,703.3 368.5,703.3 375.5,703.3 382.5,702.8 388.5,699.6 395.5,699.6 402.5,699.6 409.5,699.6 416.5,699.6 422.5,695.5 429.5,695.5 436.5,695.0 443.5,691.7 449.5,691.7 456.5,691.7 463.5,691.7 470.5,691.7 476.5,683.7 483.5,683.7 490.5,683.7 497.5,683.7 503.5,683.7 510.5,672.0 517.5,672.0 524.5,672.0 531.5,672.0 537.5,672.0 544.5,661.4 551.5,661.4 558.5,661.4 564.5,661.4 571.5,661.4 578.5,648.0 585.5,648.0 591.5,648.0 598.5,648.0 605.5,648.0 612.5,636.3 618.5,636.3 625.5,636.3 632.5,636.3 639.5,636.3 646.5,624.3 652.5,624.3 659.5,624.3 666.5,624.3 673.5,624.3 679.5,613.4 686.5,613.4 693.5,613.4 700.5,613.4 706.5,613.4 713.5,606.6 720.5,606.6 727.5,606.6 733.5,606.6 740.5,606.6 747.5,602.5 754.5,602.5 761.5,602.5 767.5,602.5 774.5,602.5 781.5,602.5 788.5,602.5 794.5,602.5 801.5,602.5 808.5,602.5 815.5,604.3 821.5,604.3 828.5,604.3 835.5,604.3 842.5,604.3 848.5,609.4 855.5,609.4 862.5,609.4 869.5,609.4 876.5,609.4 882.5,614.3 889.5,614.3 896.5,614.3" stroke="#ffff00" stroke-width="0.99" />
<polyline points="3.5,656.5 10.5,670.2 16.5,673.3 23.5,673.3 30.5,673.3 37.5,673.3 43.5,681.3 50.5,681.3 57.5,681.3 64.5,681.3 71.5,681.3 77.5,687.0 84.5,687.0 91.5,687.0 98.5,687.0 104.5,694.0 111.5,694.0 118.5,694.0 125.5,694.0 131.5,694.0 138.5,703.3 145.5,703.3 152.5,703.3 158.5,703.3 165.5,703.3 172.5,711.3 179.5,711.3 186.5,711.3 192.5,711.3 199.5,709.7 206.5,709.7 213.5,709.2 219.5,710.0 226.5,710.0 233.5,710.0 240.5,710.0 246.5,710.5 253.5,716.2 260.5,716.2 267.5,716.2 273.5,716.2 280.5,716.2 287.5,712.6 294.5,712.6 301.5,712.6 307.5,712.6 314.5,712.6 321.5,700.2 328.5,700.2 334.5,700.2 341.5,700.2 348.5,700.2 355.5,691.9 361.5,691.9 368.5,691.9 375.5,691.9 382.5,691.9 388.5,686.4 395.5,686.4 402.5,686.4 409.5,686.4 416.5,686.4 422.5,681.5 429.5,681.5 436.5,681.5 443.5,676.3 449.5,676.3 456.5,676.3 463.5,676.3 470.5,676.3 476.5,650.0 483.5,650.0 490.5,650.0 497.5,650.0 503.5,650.0 510.5,628.0 517.5,628.0 524.5,628.0 531.5,628.0 537.5,628.0 544.5,618.6 551.5,618.6 558.5,618.6 564.5,618.6 571.5,618.6 578.5,597.1 585.5,597.1 591.5,597.1 598.5,597.1 605.5,597.1 612.5,587.1 618.5,587.1 625.5,587.1 632.5,587.1 639.5,587.1 646.5,575.7 652.5,575.7 659.5,575.7 666.5,575.7 673.5,575.7 679.5,571.4 686.5,571.4 693.5,571.4 700.5,571.4 706.5,571.4 713.5,580.0 720.5,580.0 727.5,580.0 733.5,580.0 740.5,580.0 747.5,583.2 754.5,583.2 761.5,583.2 767.5,583.2 774.5,583.2 781.5,601.4 788.5,601.4 794.5,601.4 801.5,601.4 808.5,601.4 815.5,615.1 821.5,615.1 828.5,615.1 835.5,615.1 842.5,615.1 848.5,629.4 855.5,629.4 862.5,629.4 869.5,629.4 876.5,629.4 882.5,632.3 889.5,632.3 896.5,632.3" stroke="#ffffff" stroke-width="0.99" />
<polyline points="3.5,610.1 10.5,623.8 16.5,634.1 23.5,644.5 30.5,651.3 37.5,659.0 43.5,665.8 50.5,671.5 57.5,676.4 64.5,680.0 71.5,682.2 77.5,683.6 84.5,683.1 91.5,681.3 98.5,680.5 104.5,681.1 111.5,682.0 118.5,682.3 125.5,682.6 131.5,682.6 138.5,682.6 145.5,682.4 152.5,682.6 158.5,682.8 165.5,683.3 172.5,684.1 179.5,685.1 186.5,686.4 192.5,687.2 199.5,687.2 206.5,684.6 213.5,682.0 219.5,678.9 226.5,676.1 233.5,673.5 240.5,670.9 246.5,668.6 253.5,667.0 260.5,665.7 267.5,664.7 273.5,664.4 280.5,665.2 287.5,665.7 294.5,665.7 301.5,664.7 307.5,663.4 314.5,660.8 321.5,658.2 328.5,656.1 334.5,653.0 341.5,650.4 348.5,647.1 355.5,641.1 361.5,634.9 368.5,629.5 375.5,625.6 382.5,622.6 388.5,619.2 395.5,617.3 402.5,617.3 409.5,617.3 416.5,617.3 422.5,617.3 429.5,618.1 436.5,618.1 443.5,619.6 449.5,620.4 456.5,621.5 463.5,622.6 470.5,622.6 476.5,621.4 483.5,620.0 490.5,617.5 497.5,613.0 503.5,606.2 510.5,598.2 517.5,589.6 524.5,580.4 531.5,571.2 537.5,566.7 544.5,562.6 551.5,560.4 558.5,560.4 564.5,560.9 571.5,563.8 578.5,567.2 585.5,570.3 591.5,571.5 598.5,572.6 605.5,572.6 612.5,572.6 618.5,573.0 625.5,572.6 632.5,573.2 639.5,574.3 646.5,577.6 652.5,580.5 659.5,584.5 666.5,587.6 673.5,590.2 679.5,592.2 686.5,593.7 693.5,595.4 700.5,597.1 706.5,598.8 713.5,601.1 720.5,604.1 727.5,607.3 733.5,612.8 740.5,616.8 747.5,622.5 754.5,628.3 761.5,632.3 767.5,636.3 774.5,639.1 781.5,642.8 788.5,646.0 794.5,649.5 801.5,655.2 808.5,661.5 815.5,668.3 821.5,674.0 828.5,678.1 835.5,681.9 842.5,685.4 848.5,687.9 855.5,690.7 862.5,692.0 869.5,692.8 876.5,694.4 882.5,696.0 889.5,696.5 896.5,694.4" stroke="#ffff00" stroke-width="0.99" />
<polyline points="3.5,665.3 10.5,673.1 16.5,677.5 23.5,681.0 30.5,683.8 37.5,687.0 43.5,692.3 50.5,694.1 57.5,695.1 64.5,693.8 71.5,691.8 77.5,687.8 84.5,681.0 91.5,676.3 98.5,677.0 104.5,680.7 111.5,681.5 118.5,682.0 125.5,683.3 131.5,683.3 138.5,682.8 145.5,682.6 152.5,682.0 158.5,682.6 165.5,684.6 172.5,687.2 179.5,690.6 186.5,692.9 192.5,691.1 199.5,687.2 206.5,678.2 213.5,671.7 219.5,666.5 226.5,662.6 233.5,660.6 240.5,659.3 246.5,658.7 253.5,659.5 260.5,661.3 267.5,663.4 273.5,665.7 280.5,667.8 287.5,668.3 294.5,667.0 301.5,663.9 307.5,657.2 314.5,651.7 321.5,647.1 328.5,644.0 334.5,641.4 341.5,639.3 348.5,631.6 355.5,619.9 361.5,610.8 368.5,608.8 375.5,608.3 382.5,607.4 388.5,609.5 395.5,610.6 402.5,613.5 409.5,616.9 416.5,618.4 422.5,618.4 429.5,619.2 436.5,620.4 443.5,623.2 449.5,624.4 456.5,625.5 463.5,625.5 470.5,624.1 476.5,620.9 483.5,615.7 490.5,607.9 497.5,590.7 503.5,579.3 510.5,563.2 517.5,549.5 524.5,542.0 531.5,542.0 537.5,542.0 544.5,547.2 551.5,554.6 558.5,557.5 564.5,563.2 571.5,572.4 578.5,583.3 585.5,582.1 591.5,576.4 598.5,578.1 605.5,573.0 612.5,573.0 618.5,573.5 625.5,573.0 632.5,575.6 639.5,579.4 646.5,588.5 652.5,594.8 659.5,600.0 666.5,603.4 673.5,600.6 679.5,598.3 686.5,598.3 693.5,600.6 700.5,602.8 706.5,606.9 713.5,610.3 720.5,613.5 727.5,621.0 733.5,632.3 740.5,640.3 747.5,644.9 754.5,648.3 761.5,649.7 767.5,651.7 774.5,653.5 781.5,654.3 788.5,656.9 794.5,669.1 801.5,682.2 808.5,689.5 815.5,690.7 821.5,692.8 828.5,697.0" stroke="#ffffff" stroke-width="0.99" />
<polyline points="879.5,699 884,700.4 889.5,699.8 892.5,695.2 896.5,690.7" stroke="#ffffff"/>
</g>
<circle cx="134" cy="11" r="6" fill="#8c8c8c"/><path d="M131 9.7l3 3 3-3" stroke="#000" stroke-width="1.1" fill="none"/>
<circle cx="7.5" cy="522.5" r="6" fill="#8c8c8c"/><path d="M4.5 521.2l3 3 3-3" stroke="#000" stroke-width="1.1" fill="none"/>
<path d="M892.5 6.3L897.7 11.5 892.5 16.7 887.3 11.5z" stroke="#909090" stroke-width="0.9" fill="none"/>
<rect x="905.5" y="6.5" width="11" height="10" rx="2.2" ry="2.2" stroke="#707070" stroke-width="1.4" fill="none"/><rect x="912" y="8" width="3" height="7" fill="#808080"/>
<g stroke="#c8c8c8" stroke-width="1" fill="none" shape-rendering="crispEdges"><path d="M179.5 493.5H191M179.5 493.5l4-3.5M179.5 493.5l4 3.5"/><path d="M524.5 25v-3.5h4M525 23L536.5 26.5"/></g>
<rect x="517" y="500" width="13" height="13" fill="#8b0000"/><rect x="720" y="500" width="13" height="13" fill="#0a3c82"/><rect x="889" y="500" width="13" height="13" fill="#9c4a00"/>
<text class="cj" x="507" y="511" fill="#ff0000">减</text>
<rect x="517" y="500" width="13" height="13" fill="#8b0000"/><rect x="500" y="499" width="13" height="15" fill="#000"/>
<text class="cj" x="517.5" y="511" fill="#fff">增</text><text class="cj" x="720.5" y="511" fill="#fff">财</text><text class="cj" x="889.5" y="511" fill="#fff">榜</text>
<path d="M528 500h2v2zM731 500h2v2zM900 500h2v2z" fill="#000"/>
<text class="cj" y="15.6" fill="#dcdcdc" x="2.4 14.4 26.4 38.4 52.6 56.4 68.3 80.8 83 95 107 118.9" style="font-size:12.5px">宇晶股份(日线.前复权)</text>
<text x="191.5" y="499" fill="#c8c8c8">19.00</text><text x="538.7" y="32" fill="#c8c8c8">32.16</text>
<text class="cj" y="527.6" fill="#dcdcdc" x="18 30 42 54" style="font-size:12.5px">周期共振</text><text x="71" y="527" fill="#e8e8e8">DIF: -1.00</text><text x="129" y="527" fill="#ffff00">DEA: -1.11</text>
</svg></body></html>
